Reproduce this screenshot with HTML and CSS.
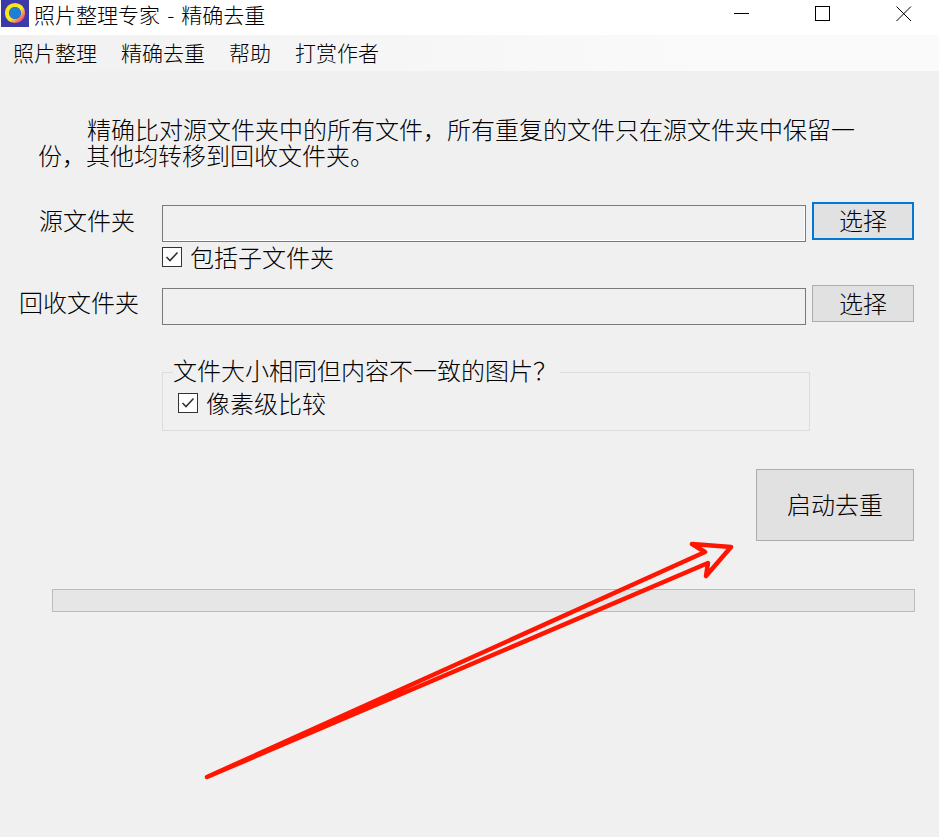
FILE: index.html
```html
<!DOCTYPE html>
<html lang="zh-CN">
<head>
<meta charset="utf-8">
<title>照片整理专家 - 精确去重</title>
<link rel="stylesheet" href="styles.css">
</head>
<body>
<div class="window">
  <header class="titlebar">
    <svg class="app-icon" width="28" height="27" viewBox="0 0 28 27">
      <defs>
        <linearGradient id="ring" x1="0" y1="0" x2="1" y2="1">
          <stop offset="0" stop-color="#f6e21c"/>
          <stop offset="0.55" stop-color="#fde81a"/>
          <stop offset="1" stop-color="#f0319a"/>
        </linearGradient>
      </defs>
      <rect width="28" height="27" fill="#3c3aa8"/>
      <circle cx="14" cy="13" r="8" fill="none" stroke="url(#ring)" stroke-width="4.2"/>
      <circle cx="14" cy="13" r="6" fill="#1e7fd6"/>
    </svg>
    <span class="title">照片整理专家 - 精确去重</span>
    <div class="controls">
      <svg class="ctl" width="16" height="16" viewBox="0 0 16 16"><path d="M0 7.5H15" stroke="#000" fill="none"/></svg>
      <svg class="ctl" width="16" height="16" viewBox="0 0 16 16"><rect x="0.5" y="0.5" width="14" height="14" stroke="#000" fill="none"/></svg>
      <svg class="ctl" width="16" height="16" viewBox="0 0 16 16"><path d="M0.5 0.5L15 15M15 0.5L0.5 15" stroke="#000" fill="none"/></svg>
    </div>
  </header>
  <nav class="menubar">
    <span>照片整理</span><span>精确去重</span><span>帮助</span><span>打赏作者</span>
  </nav>
  <main class="content">
    <p class="intro">精确比对源文件夹中的所有文件，所有重复的文件只在源文件夹中保留一份，其他均转移到回收文件夹。</p>
    <div class="row row-source">
      <label class="label label-source">源文件夹</label>
      <div class="input input-active"></div>
      <button class="btn btn-focus">选择</button>
    </div>
    <label class="check check-sub"><span class="box"><svg width="14" height="12" viewBox="0 0 14 12"><path d="M1.5 6L5 9.5L12.5 1.5" fill="none" stroke="#333" stroke-width="1.6"/></svg></span>包括子文件夹</label>
    <div class="row row-recycle">
      <label class="label label-recycle">回收文件夹</label>
      <div class="input"></div>
      <button class="btn">选择</button>
    </div>
    <fieldset class="group">
      <legend>文件大小相同但内容不一致的图片？</legend>
      <label class="check"><span class="box"><svg width="14" height="12" viewBox="0 0 14 12"><path d="M1.5 6L5 9.5L12.5 1.5" fill="none" stroke="#333" stroke-width="1.6"/></svg></span>像素级比较</label>
    </fieldset>
    <div class="actions"><button class="btn btn-start">启动去重</button></div>
    <div class="progress"></div>
  </main>
  <svg class="arrow" width="939" height="837" viewBox="0 0 939 837">
    <path d="M207 777L705 552L692 544L731 547L706 576L708 563Z" fill="none" stroke="#ff1500" stroke-width="4.5" stroke-linejoin="round" stroke-linecap="round"/>
  </svg>
</div>
</body>
</html>
```
FILE: styles.css
```css
* { box-sizing: border-box; }
html, body { margin: 0; padding: 0; }
body {
  font-family: "Noto Sans CJK SC", "Noto Sans", sans-serif;
  font-weight: 300;
  color: #000;
  background: #f0f0f0;
}
.window {
  position: relative;
  width: 939px;
  height: 837px;
  overflow: hidden;
  background: #f0f0f0;
}
.titlebar {
  display: flex;
  align-items: flex-start;
  height: 35px;
  background: #fff;
  padding-left: 1px;
}
.app-icon { flex: none; }
.title {
  margin-left: 5px;
  font-size: 21px;
  line-height: 28px;
  word-spacing: 2.5px;
  color: #000;
}
.controls {
  display: flex;
  margin-left: auto;
  gap: 65px;
  padding: 6px 27px 0 0;
}
.ctl { display: block; }
.menubar {
  display: flex;
  gap: 24px;
  height: 36px;
  padding-left: 13px;
  font-size: 21px;
  line-height: 34px;
  color: #000;
  background: linear-gradient(to right, #f1f1f1, #fafafa 75%);
}
.content { padding: 45px 0 0 0; }
.intro {
  margin: 0 0 0 38px;
  width: 830px;
  font-size: 24px;
  line-height: 26px;
  text-indent: 49px;
}
.row {
  display: flex;
  align-items: flex-start;
}
.row-source { margin-top: 34px; }
.row-recycle { margin-top: 13px; }
.label {
  width: 162px;
  font-size: 24px;
  line-height: 34px;
}
.label-source { padding: 1px 0 0 39px; }
.label-recycle { padding-left: 19px; }
.input {
  width: 644px;
  height: 37px;
  margin-top: 3px;
  border: 1px solid #7a7a7a;
  background: #f0f0f0;
}
.input-active { box-shadow: inset -1px -1px 0 #fff; }
.btn {
  font: inherit;
  color: #000;
  font-size: 24px;
  line-height: 1;
  background: #e1e1e1;
  border: 1px solid #adadad;
  padding: 0 0 2px;
}
.row .btn {
  width: 102px;
  height: 37px;
  margin-left: 6px;
}
.row-source .btn { height: 38px; }
.btn-focus { border: 2px solid #0078d7; }
.check {
  display: flex;
  align-items: center;
  gap: 8px;
  font-size: 24px;
  line-height: 30px;
}
.check-sub { margin: 0 0 0 162px; }
.box {
  flex: none;
  display: flex;
  align-items: center;
  justify-content: center;
  width: 20px;
  height: 20px;
  border: 1px solid #333;
  background: #fff;
}
.group {
  width: 648px;
  height: 73px;
  margin: 33px 0 0 162px;
  padding: 0 0 0 15px;
  border: 1px solid #dcdcdc;
  min-inline-size: 0;
}
.group legend {
  font-size: 24px;
  line-height: 24px;
  padding: 0 3px 4px 0;
  margin-left: -5px;
}
.group .check {
  margin-top: 4px;
  line-height: 26px;
}
.actions {
  display: flex;
  justify-content: flex-end;
  padding-right: 25px;
  margin-top: 38px;
}
.btn-start {
  width: 158px;
  height: 72px;
}
.progress {
  width: 863px;
  height: 23px;
  margin: 48px 0 0 52px;
  border: 1px solid #bcbcbc;
  background: #e6e6e6;
}
.arrow {
  position: absolute;
  left: 0;
  top: 0;
  pointer-events: none;
}
```
